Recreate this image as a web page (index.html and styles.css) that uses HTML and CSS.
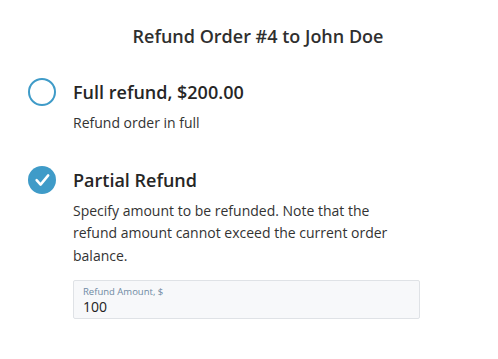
FILE: index.html
```html
<!DOCTYPE html>
<html>
<head>
<meta charset="utf-8">
<link rel="stylesheet" href="styles.css">
</head>
<body>
<div class="dialog">
  <h1 class="title">Refund Order #4 to John Doe</h1>
  <div class="option">
    <span class="radio"></span>
    <div class="option-body">
      <div class="option-title">Full refund, $200.00</div>
      <p class="option-desc">Refund order in full</p>
    </div>
  </div>
  <div class="option option-partial">
    <span class="radio radio-checked">
      <svg width="28" height="28" viewBox="0 0 28 28"><path d="M8.6 14.2 L12.6 18.6 L20.2 9.4" fill="none" stroke="#fff" stroke-width="2.5" stroke-linecap="round" stroke-linejoin="round"/></svg>
    </span>
    <div class="option-body">
      <div class="option-title">Partial Refund</div>
      <p class="option-desc desc-wide">Specify amount to be refunded. Note that the refund amount cannot exceed the current order balance.</p>
      <div class="field">
        <div class="field-label">Refund Amount, $</div>
        <div class="field-value">100</div>
      </div>
    </div>
  </div>
</div>
</body>
</html>
```
FILE: styles.css
```css
html, body {
  margin: 0;
  padding: 0;
  background: #fff;
}
body {
  font-family: "Open Sans", "Liberation Sans", sans-serif;
  color: #333;
}
.dialog {
  width: 498px;
  padding-top: 23px;
  box-sizing: border-box;
}
.title {
  margin: 0;
  padding-left: 18px;
  text-align: center;
  font-size: 18px;
  font-weight: 600;
  line-height: 26px;
  color: #2f2f2f;
}
.option {
  display: flex;
  gap: 17px;
  padding-left: 28px;
  margin-top: 29px;
}
.option-partial {
  margin-top: 31px;
}
.radio {
  flex: none;
  width: 28px;
  height: 28px;
  box-sizing: border-box;
  border: 2px solid #3f9bc8;
  border-radius: 50%;
  display: block;
}
.radio-checked {
  background: #3f9bc8;
  border: none;
}
.radio-checked svg {
  display: block;
}
.option-title {
  font-size: 18px;
  font-weight: 600;
  line-height: 28px;
  color: #262626;
}
.option-desc {
  margin: 6px 0 0;
  font-size: 14px;
  line-height: 22.5px;
  color: #333;
}
.desc-wide {
  width: 330px;
}
.field {
  margin-top: 13px;
  width: 347px;
  height: 39px;
  box-sizing: border-box;
  border: 1px solid #dfe2e6;
  border-radius: 2px;
  background: #f7f8fa;
  padding: 4px 9px 0;
}
.field-label {
  font-size: 9.5px;
  line-height: 13px;
  color: #6f8aa3;
}
.field-value {
  font-size: 14px;
  line-height: 17px;
  color: #222;
}
```
